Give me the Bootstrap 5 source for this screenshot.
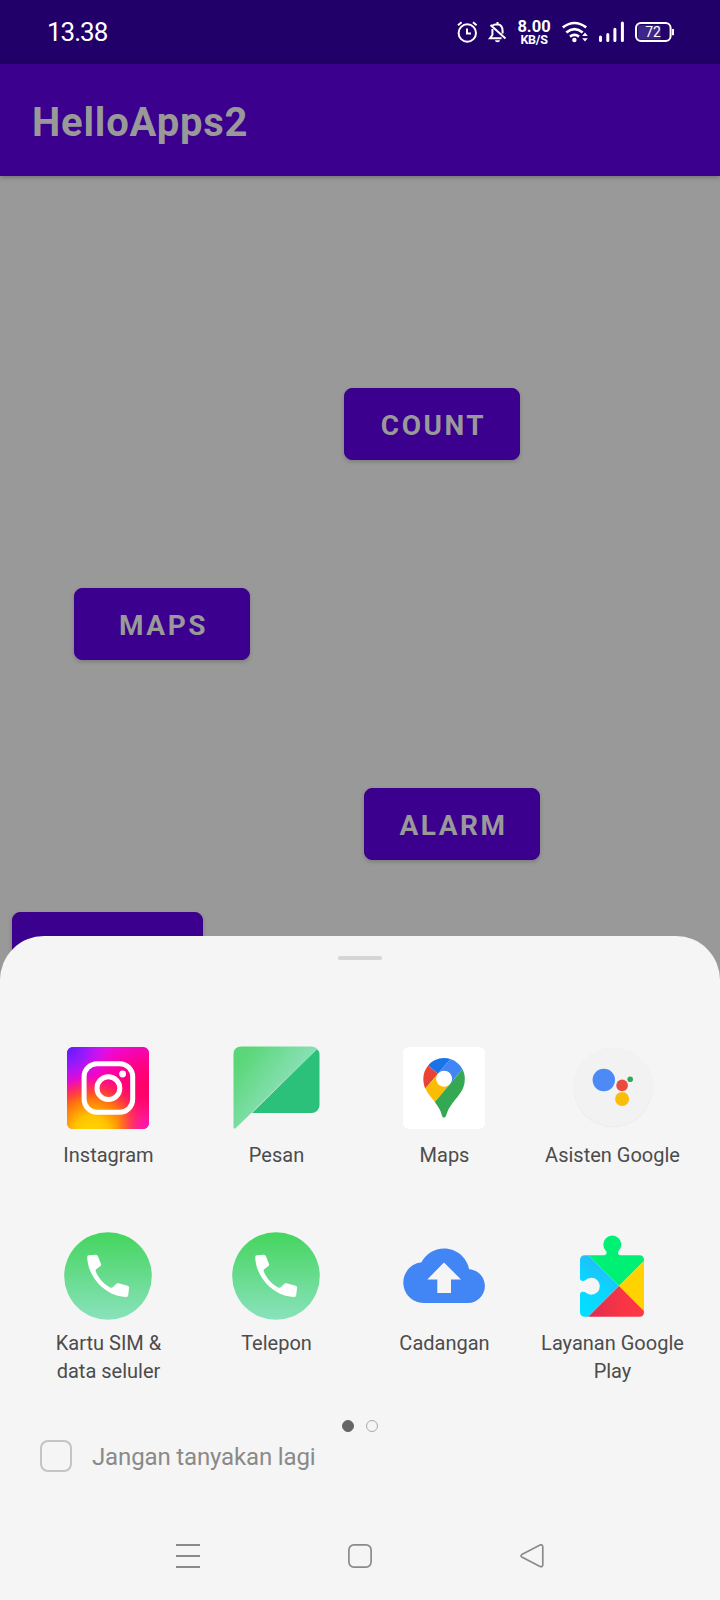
<!DOCTYPE html>
<html lang="id">
<head>
<meta charset="utf-8">
<meta name="viewport" content="width=device-width, initial-scale=1">
<title>HelloApps2</title>
<link href="https://cdn.jsdelivr.net/npm/bootstrap@5.3.0/dist/css/bootstrap.min.css" rel="stylesheet">
<style>
  body { font-family: Roboto, "Liberation Sans", sans-serif; background: #999; }
  svg { display: block; flex: none; }
  .screen { width: 720px; height: 1600px; background: #999; }
  .statusbar { height: 64px; background: #210069; color: #fff; padding: 0 46px 0 47px; }
  .clock { font-size: 26px; line-height: 64px; letter-spacing: -1px; }
  .speed { width: 34px; font-weight: 700; text-align: center; margin: 0 11px 0 10px; }
  .speed-num { font-size: 16.5px; line-height: 15px; letter-spacing: 0; }
  .speed-unit { font-size: 12.5px; line-height: 11px; letter-spacing: -.3px; }
  .titlebar { height: 112px; background: #3b008d; padding: 5px 32px 0; box-shadow: 0 1px 5px rgba(0,0,0,.3); }
  .titlebar h1 { font-size: 40px; font-weight: 700; color: #999; letter-spacing: .8px; line-height: 48px; }
  .canvas-area { height: 760px; padding-top: 212px; gap: 128px; }
  .app-btn { --bs-btn-bg: #3b008d; --bs-btn-border-color: #3b008d; --bs-btn-color: #999;
    width: 176px; height: 72px; flex: none; border-radius: 8px; font-size: 28px; font-weight: 700;
    letter-spacing: 2.5px; padding: 3px 0 0 3px; line-height: 1; box-shadow: 0 2px 4px rgba(0,0,0,.18); }
  .ms-count { margin-left: 344px; } .ms-maps { margin-left: 74px; } .ms-alarm { margin-left: 364px; }
  .ms-last { margin: -76px 0 0 12px; width: 191px; }
  .sheet { height: 664px; background: #f5f5f5; border-radius: 44px 44px 0 0; padding-top: 20px; }
  .handle { width: 44px; height: 4px; border-radius: 2px; background: #d5d5d5; }
  .app-grid { padding: 84px 24px 0; }
  .app-item { height: 188px; color: #4c4c4c; }
  .app-label { font-size: 20px; line-height: 28px; letter-spacing: 0; margin: 9px -8px 0; padding-left: 1px; text-align: center; }
  .pager { height: 12px; gap: 12px; }
  .dot { width: 12px; height: 12px; border: 1px solid #aaa; }
  .dot.active { background: #666; border-color: #666; }
  .ask { padding: 0 40px; margin-top: 8px; height: 32px; color: #8a8a8a; }
  .ask .form-check-input { width: 32px; height: 32px; border: 2.5px solid #c4c4c4; border-radius: 8px; background: transparent; margin: 0; }
  .ask label { font-size: 24px; line-height: 32px; margin: 1px 0 0 20px; letter-spacing: -.14px; }
  .navkeys { margin-top: 72px; padding: 0 176px; }
</style>
</head>
<body>
<div class="screen position-relative overflow-hidden">
  <header class="statusbar d-flex align-items-center">
    <span class="clock me-auto">13.38</span>
    <!-- alarm and muted bell -->
    <svg width="50" height="24" viewBox="0 0 50 24" fill="none" stroke="#fff" stroke-width="2">
      <circle cx="10.3" cy="13" r="8.7"/><path d="M10 8.5V13.5H14M1 5.2L4.6 2.2M16 2.2L19.6 5.2"/>
      <path d="M35.2 5.8Q37 4.3 40.5 4.3Q45.6 5 45.6 11V13.5M35.4 9V15L33 18.2H44.5M40.5 2V4.3M33.5 5L48.5 18.5"/>
      <path d="M38 20.3H43A2.5 2 0 0 1 38 20.3Z" fill="#fff" stroke="none"/>
    </svg>
    <div class="speed"><div class="speed-num">8.00</div><div class="speed-unit">KB/S</div></div>
    <!-- wifi, signal and battery -->
    <svg width="112" height="24" viewBox="0 0 112 24" fill="none" stroke="#fff">
      <g stroke-width="2.6"><path d="M.8 7.4Q12.5-1.4 24.2 7.4M4.3 12.4Q12.5 5.8 20.7 12.4"/><path d="M8 16.6Q12.5 13.2 17 16.6"/></g>
      <circle cx="12.4" cy="20" r="2.2" fill="#fff" stroke="none"/>
      <path d="M20.2 16L23 12.6L25.8 16ZM20.2 18.2L23 21.6L25.8 18.2Z" fill="#fff" stroke="none"/>
      <path d="M38.5 17V20.6M45.8 14.6V20.6M52.9 9.2V20.6M60.4 3V20.6" stroke-width="3" stroke-linecap="round"/>
      <rect x="76" y="5.2" width="22.5" height="14.4" fill="#3f248a" stroke="none"/>
      <rect x="74" y="3" width="34.6" height="18" rx="5" stroke-width="2"/>
      <path d="M111 9V15.2" stroke-width="2"/>
      <text x="91" y="17" font-size="14" text-anchor="middle" fill="#fff" stroke="none" font-family="Roboto, sans-serif">72</text>
    </svg>
  </header>

  <nav class="titlebar d-flex align-items-center position-relative"><h1 class="m-0">HelloApps2</h1></nav>

  <main class="canvas-area d-flex flex-column align-items-start">
    <button class="btn app-btn ms-count">COUNT</button>
    <button class="btn app-btn ms-maps">MAPS</button>
    <button class="btn app-btn ms-alarm">ALARM</button>
    <button class="btn app-btn ms-last" aria-label="Tombol"></button>
  </main>

  <section class="sheet position-absolute bottom-0 start-0 end-0">
    <div class="handle mx-auto"></div>
    <div class="app-grid">
      <div class="row row-cols-4 g-0">
        <div class="col app-item d-flex flex-column align-items-center">
          <svg width="88" height="88" viewBox="0 0 88 88">
            <defs>
              <linearGradient id="igBase" x1=".15" y1="0" x2=".3" y2="1"><stop offset="0" stop-color="#e010f0"/><stop offset=".4" stop-color="#ff00b4"/><stop offset=".6" stop-color="#ff1468"/><stop offset="1" stop-color="#ff5a1c"/></linearGradient>
              <radialGradient id="igViolet" cx="0" cy="0" r=".58"><stop offset="0" stop-color="#5a1cff"/><stop offset=".4" stop-color="#8a1cff" stop-opacity=".85"/><stop offset="1" stop-color="#e010ff" stop-opacity="0"/></radialGradient>
              <radialGradient id="igYellow" cx=".3" cy="1.05" r=".7"><stop offset="0" stop-color="#ffd800"/><stop offset=".3" stop-color="#ffc400"/><stop offset=".6" stop-color="#ff8500" stop-opacity=".85"/><stop offset="1" stop-color="#ff3a30" stop-opacity="0"/></radialGradient>
              <radialGradient id="igPink" cx="1" cy=".5" r=".75"><stop offset="0" stop-color="#ff0064"/><stop offset=".4" stop-color="#ff0078" stop-opacity=".8"/><stop offset="1" stop-color="#ff00a0" stop-opacity="0"/></radialGradient>
              <radialGradient id="igCorner" cx="1" cy="1" r=".4"><stop offset="0" stop-color="#ff10c8"/><stop offset="1" stop-color="#ff1090" stop-opacity="0"/></radialGradient>
            </defs>
            <g><rect x="3" y="3" width="82" height="82" rx="6" fill="url(#igBase)"/><rect x="3" y="3" width="82" height="82" rx="6" fill="url(#igPink)"/><rect x="3" y="3" width="82" height="82" rx="6" fill="url(#igViolet)"/><rect x="3" y="3" width="82" height="82" rx="6" fill="url(#igYellow)"/><rect x="3" y="3" width="82" height="82" rx="6" fill="url(#igCorner)"/></g>
            <g fill="none" stroke="#fff" stroke-width="5"><rect x="20.1" y="19.7" width="48.6" height="48.6" rx="13"/><circle cx="44.4" cy="44.2" r="11.4"/></g>
            <circle cx="58.6" cy="30" r="3.4" fill="#fff"/>
          </svg>
          <div class="app-label">Instagram</div>
        </div>
        <div class="col app-item d-flex flex-column align-items-center">
          <svg width="88" height="88" viewBox="0 0 88 88">
            <defs><linearGradient id="msg" x1="5" y1="20" x2="48" y2="52" gradientUnits="userSpaceOnUse"><stop offset="0" stop-color="#5ad678"/><stop offset="1" stop-color="#88e0b4"/></linearGradient></defs>
            <path d="M85 5L20 69H79.5A8 8 0 0 0 87.5 61V11Q87.5 7 85 5Z" fill="#2bc17b"/>
            <path d="M9.5 2.4H79Q83.5 2.4 85.2 5L3.5 84.3Q1.5 85.5 1.5 83V10Q1.5 2.4 9.5 2.4Z" fill="url(#msg)"/>
          </svg>
          <div class="app-label">Pesan</div>
        </div>
        <div class="col app-item d-flex flex-column align-items-center">
          <svg width="88" height="88" viewBox="0 0 88 88">
            <rect x="3" y="3" width="82" height="82" rx="6" fill="#fff"/>
            <g transform="translate(23.3 14) scale(.4495)">
              <path fill="#1a73e8" d="M60.2 2.2C55.8.8 51 0 46.1 0 32 0 19.3 6.4 10.8 16.5l21.8 18.3L60.2 2.2z"/>
              <path fill="#ea4335" d="M10.8 16.5C4.1 24.5 0 34.9 0 46.1c0 8.7 1.7 15.7 4.6 22l28-33.3-21.8-18.3z"/>
              <path fill="#4285f4" d="M46.2 28.5c9.8 0 17.7 7.9 17.7 17.7 0 4.3-1.6 8.3-4.2 11.4 0 0 13.9-16.6 27.5-32.7-5.6-10.8-15.3-19-27-22.7L32.6 34.8c3.3-3.8 8.1-6.3 13.6-6.3"/>
              <path fill="#fbbc04" d="M46.2 63.8c-9.8 0-17.7-7.9-17.7-17.7 0-4.3 1.5-8.3 4.1-11.3l-28 33.3c4.8 10.6 12.8 19.2 21 29.9l34.1-40.5c-3.3 3.9-8.1 6.3-13.5 6.3"/>
              <path fill="#34a853" d="M59.1 109.2c15.4-24.1 33.3-35 33.3-63 0-7.7-1.9-14.9-5.2-21.3L25.6 98c2.6 3.4 5.3 7.3 7.9 11.3 9.4 14.5 6.8 23.1 12.8 23.1s3.4-8.7 12.8-23.2"/>
            </g>
          </svg>
          <div class="app-label">Maps</div>
        </div>
        <div class="col app-item d-flex flex-column align-items-center">
          <svg width="88" height="88" viewBox="0 0 88 88">
            <circle cx="45" cy="43.6" r="39.8" fill="#ededed"/><circle cx="45" cy="43" r="39.3" fill="#f2f2f2"/>
            <circle cx="35.8" cy="36" r="11.2" fill="#4c8bf5"/><circle cx="54.1" cy="41.4" r="5.8" fill="#e94b3f"/>
            <circle cx="54.1" cy="55" r="7" fill="#fbbd0c"/><circle cx="62.2" cy="35.3" r="2.8" fill="#35a558"/>
          </svg>
          <div class="app-label text-nowrap">Asisten Google</div>
        </div>
        <div class="col app-item d-flex flex-column align-items-center">
          <svg width="88" height="88" viewBox="0 0 88 88">
            <defs><linearGradient id="tel" x2="0" y2="1"><stop offset="0" stop-color="#46d660"/><stop offset=".1" stop-color="#4bd667"/><stop offset="1" stop-color="#8ae2bc"/></linearGradient></defs>
            <circle cx="44" cy="44" r="43.8" fill="url(#tel)"/>
            <path id="handset" fill="#fff" d="M24.7 23.3L31.8 22.8Q33.4 22.8 34 24.3L37 32Q37.4 33.2 36.5 34L32.2 37.3Q31.3 38 31.8 39.5C34.3 46 40.5 52.8 46.2 55.5Q47.9 56.2 49.1 55L52.4 51.7Q53.2 51 54.4 51.3L63.7 53.8Q65.2 54.3 65.1 55.7L64.2 63.3Q64 65 62.3 65C42.5 64.5 24 46.5 23.2 25.2Q23.1 23.5 24.7 23.3Z"/>
          </svg>
          <div class="app-label">Kartu SIM &amp;<br>data seluler</div>
        </div>
        <div class="col app-item d-flex flex-column align-items-center">
          <svg width="88" height="88" viewBox="0 0 88 88"><circle cx="44" cy="44" r="43.8" fill="url(#tel)"/><use href="#handset"/></svg>
          <div class="app-label">Telepon</div>
        </div>
        <div class="col app-item d-flex flex-column align-items-center">
          <svg width="88" height="88" viewBox="0 0 88 88">
            <path transform="translate(3.3 3) scale(3.4)" fill="#4285f4" d="M19.35 10.04C18.67 6.59 15.64 4 12 4 9.11 4 6.6 5.64 5.35 8.04 2.34 8.36 0 10.91 0 14c0 3.31 2.69 6 6 6h13c2.76 0 5-2.24 5-5 0-2.64-2.05-4.78-4.65-4.96z"/>
            <path d="M44 30.5L61 47.4H51V61H37.3V47.4H27.3Z" fill="#f5f5f5"/>
          </svg>
          <div class="app-label">Cadangan</div>
        </div>
        <div class="col app-item d-flex flex-column align-items-center">
          <svg width="88" height="88" viewBox="0 0 88 88">
            <defs><clipPath id="piece"><path d="M17 23.3H36Q38.5 23.3 38.6 20.5Q38.6 19.8 38 19A9 9 0 1 1 50.6 19Q49.8 19.8 50 20.8Q50.2 23.3 52.5 23.3H71.5Q76 23.3 76 28V80Q76 84.7 71.5 84.7H17Q12 84.7 12 80V62.5Q12 60 14.5 59.8Q16.5 59.6 17.3 60.2A8.5 8.5 0 1 0 17.3 48.2Q16.5 49 14.5 49Q12 48.9 12 46.5V28Q12 23.3 17 23.3Z"/></clipPath>
            <linearGradient id="cy" x1="0" y1="1" x2=".3" y2="0"><stop offset="0" stop-color="#00e2ff"/><stop offset=".6" stop-color="#0cd4ff"/><stop offset="1" stop-color="#2ab4f8"/></linearGradient>
            <linearGradient id="rd" x2="1" y2="0"><stop offset="0" stop-color="#dc2c50"/><stop offset=".6" stop-color="#fa3644"/><stop offset="1" stop-color="#ff3a44"/></linearGradient></defs>
            <g clip-path="url(#piece)">
              <path d="M12 15L51 54L12 93Z" fill="url(#cy)"/><path d="M0 3L51 54L102 3V0H0Z" fill="#00f076"/>
              <path d="M51 54L80 25V83Z" fill="#ffd200"/><path d="M51 54L18 87H84Z" fill="url(#rd)"/>
            </g>
          </svg>
          <div class="app-label">Layanan Google<br>Play</div>
        </div>
      </div>
    </div>
    <div class="pager d-flex justify-content-center"><span class="dot active rounded-circle"></span><span class="dot rounded-circle"></span></div>
    <div class="ask d-flex align-items-center"><input class="form-check-input" type="checkbox" id="ask"><label for="ask">Jangan tanyakan lagi</label></div>
    <div class="navkeys d-flex justify-content-between">
      <svg width="24" height="24" viewBox="0 0 24 24" stroke="#8a8a8a" stroke-width="2"><path d="M0 1H24M0 12H24M0 23H24"/></svg>
      <svg width="24" height="24" viewBox="0 0 24 24" fill="none" stroke="#8a8a8a" stroke-width="1.7"><rect x=".9" y=".9" width="22.2" height="22.2" rx="5"/></svg>
      <svg width="24" height="24" viewBox="0 0 24 24" fill="none" stroke="#8a8a8a" stroke-width="1.7"><path d="M1.8 10.6L20 1Q22.8 .2 22.8 3V20.5Q22.8 23.4 20 22.4L1.8 13Q.2 11.8 1.8 10.6Z"/></svg>
    </div>
  </section>
</div>
<script src="https://cdn.jsdelivr.net/npm/bootstrap@5.3.0/dist/js/bootstrap.bundle.min.js"></script>
</body>
</html>
